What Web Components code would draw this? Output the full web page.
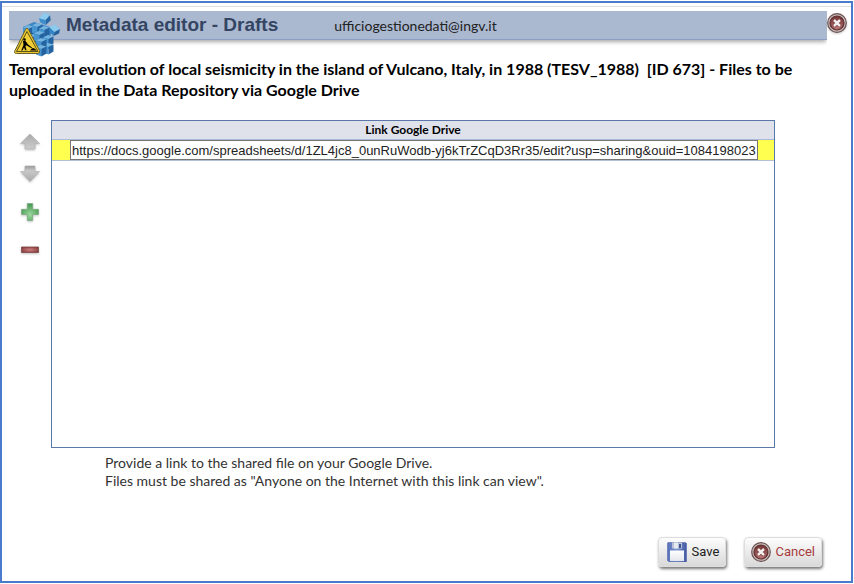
<!DOCTYPE html>
<html lang="en">
<head>
<meta charset="utf-8">
<title>Metadata editor - Drafts</title>
<style>
  html, body { margin: 0; background: #fff; }
  body { font-family: Lato, "Noto Sans", sans-serif; color: #000; }
</style>
</head>
<body>
<metadata-dialog>
  <dialog-header slot="header" email="ufficiogestionedati@ingv.it">Metadata editor - Drafts</dialog-header>
  <span slot="subject">Temporal evolution of local seismicity in the island of Vulcano, Italy, in 1988 (TESV_1988)&nbsp; [ID 673] - Files to be uploaded in the Data Repository via Google Drive</span>
  <row-tools slot="tools"></row-tools>
  <link-table slot="table" heading="Link Google Drive" value="https://docs.google.com/spreadsheets/d/1ZL4jc8_0unRuWodb-yj6kTrZCqD3Rr35/edit?usp=sharing&amp;ouid=1084198023"></link-table>
  <span slot="help">Provide a link to the shared file on your Google Drive.<br>Files must be shared as "Anyone on the Internet with this link can view".</span>
  <action-button slot="actions" icon="save">Save</action-button>
  <action-button slot="actions" icon="close" class="cancel">Cancel</action-button>
</metadata-dialog>

<script>
const icons = {
  close: `<svg viewBox="0 0 20 20" aria-hidden="true">
    <defs><radialGradient id="r" cx=".5" cy=".75" r=".7"><stop offset="0" stop-color="#c98080"/><stop offset="1" stop-color="#783434"/></radialGradient></defs>
    <circle cx="10" cy="10" r="9.3" fill="#c9bcbc" stroke="#6d5050" stroke-width="1.2"/>
    <circle cx="10" cy="10" r="7" fill="url(#r)" stroke="#5c3030" stroke-width="1.2"/>
    <path d="M7 7l6 6M13 7l-6 6" stroke="#6a3535" stroke-width="4"/>
    <path d="M7 7l6 6M13 7l-6 6" stroke="#f4eeee" stroke-width="2.5"/></svg>`,
  save: `<svg viewBox="0 0 20 20" aria-hidden="true">
    <defs><linearGradient id="f" x2="1" y2="0"><stop offset="0" stop-color="#5870b8"/><stop offset=".5" stop-color="#7e95d2"/><stop offset="1" stop-color="#4258a2"/></linearGradient>
    <linearGradient id="p" x2="0" y2="1"><stop offset="0" stop-color="#fff"/><stop offset="1" stop-color="#e4e6ec"/></linearGradient></defs>
    <path d="M1 .5h17.5l1 1V20H2.200L.5 18.300V1z" fill="url(#f)" stroke="#5268ad" stroke-width=".6"/>
    <path d="M5 .5h10v6H5z" fill="#b9c2d8"/><path d="M7 .5h4v6H7z" fill="#e5e9f0"/><path d="M12 2h2v4h-2z" fill="#40538f"/>
    <path d="M3 8.500h14V19H3z" fill="url(#p)"/></svg>`,
  up: `<svg viewBox="0 0 20 18" aria-hidden="true"><defs><linearGradient id="u" x2="0" y2="1"><stop offset="0" stop-color="#aaa"/><stop offset="1" stop-color="#ccc"/></linearGradient></defs>
    <path d="M10 1L19.500 10.500H15V16H5V10.500H.5z" fill="url(#u)" stroke="#b0b0b0" stroke-width=".6"/></svg>`,
  down: `<svg viewBox="0 0 20 18" aria-hidden="true"><defs><linearGradient id="d" x2="0" y2="1"><stop offset="0" stop-color="#999"/><stop offset=".3" stop-color="#c9c9c9"/><stop offset="1" stop-color="#aaa"/></linearGradient></defs>
    <path d="M10 16.500L19.500 6.500H15V1H5V6.500H.5z" fill="url(#d)" stroke="#b0b0b0" stroke-width=".6"/></svg>`,
  add: `<svg viewBox="0 0 20 18" aria-hidden="true"><defs><radialGradient id="a" cx=".5" cy=".65" r=".6"><stop offset="0" stop-color="#9bd89d"/><stop offset="1" stop-color="#4b9957"/></radialGradient></defs>
    <path d="M7.300.5h5.400V6.300H18.500V11.500H12.700V17.500H7.300V11.500H1.500V6.300H7.300z" fill="url(#a)" stroke="#76a87a" stroke-width=".6"/></svg>`,
  remove: `<svg viewBox="0 0 20 18" aria-hidden="true"><defs><radialGradient id="m" cx=".5" cy=".5" r=".6"><stop offset="0" stop-color="#cf8080"/><stop offset="1" stop-color="#843a3a"/></radialGradient></defs>
    <path d="M1.500 6h17v5.500h-17z" fill="url(#m)" stroke="#824848" stroke-width=".8"/></svg>`,
  logo: `<svg viewBox="0 0 48 44" aria-hidden="true">
    <defs><g id="c"><path d="M0 2.500L5 0 10.500 1.500 5.500 4z" fill="#74b4df"/><path d="M0 2.500L5.500 4V11.500L0 9.500z" fill="#4795cf"/><path d="M5.500 4L10.500 1.500V8.500L5.500 11.500z" fill="#2562a0"/></g></defs>
    <path d="M9 14L20 9 36 14 38 33 27 43 14 36z" fill="#3a86c3"/>
    <use href="#c" x="9" y="12"/><use href="#c" x="18" y="10"/><use href="#c" x="25" y="13"/>
    <use href="#c" x="12" y="21"/><use href="#c" x="20" y="18"/>
    <use href="#c" x="29" y="22"/><use href="#c" x="29" y="30"/>
    <use href="#c" x="22" y="25"/><use href="#c" x="22" y="32"/>
    <g transform="rotate(-8 31 6)"><path d="M25 4.500L31 0 36.500 3 31.500 7z" fill="#8bcbed"/><path d="M25 4.500L31.500 7 31 12 26 9z" fill="#3d8fcb"/><path d="M31.500 7L36.500 3V8L31 12z" fill="#2767a5"/></g>
    <path d="M35 14L41 11.500 46 16 40.500 19z" fill="#8bcbed"/><path d="M35 14L40.500 19 39.500 23 36 19.500z" fill="#3286c5"/><path d="M40.500 19L46 16 45 20.500 39.500 23z" fill="#245f9d"/>
    <path d="M11.500 16.500Q13 14 14.500 16.500L25.500 37.500Q26.500 40.500 23.500 40.500H2.500Q-.5 40.500 1 37.500z" fill="#e9c72e" stroke="#66612f" stroke-width="1"/>
    <path d="M13 18.500L24 38.500H2.500z" fill="#efcd35" stroke="#393516" stroke-width=".8"/>
    <circle cx="10.500" cy="26.500" r="1.200"/><path d="M9 28l2.200-.5 2.800 4 4 3-.6.800-5-3-1 1 1.200 4h-1.400L10 34.500 8.500 37.500H7.200L9.500 32z"/><path d="M16 37.500q2-3.500 4-2.300t3 2.300z"/></svg>`
};

function define(name, html, ready) {
  const template = document.createElement('template');
  template.innerHTML = html;
  customElements.define(name, class extends HTMLElement {
    constructor() {
      super();
      this.attachShadow({ mode: 'open' }).append(template.content.cloneNode(true));
    }
    connectedCallback() { if (ready) ready(this, this.shadowRoot); }
  });
}

define('dialog-header', `<style>
  :host { display: flex; align-items: flex-start; }
  .bar { flex: 1; box-sizing: border-box; height: 29px; display: flex; align-items: center; background: #aab8d0;
    border-bottom: 1px solid #8d9fc3; box-shadow: 0 3px 4px -1px #aaa; clip-path: inset(0 0 -20px 0); }
  .logo { width: 48px; height: 44px; align-self: flex-start; margin: 2px 4px 0 5px; }
  .logo svg { display: block; width: 100%; height: 100%; }
  h1 { margin: 0 56px 0 0; font: bold 19px/28px "Liberation Sans", sans-serif; color: #344563; white-space: nowrap; }
  .email { font-size: 14px; color: #222; }
  button { width: 20px; height: 20px; padding: 0; border: 0; background: none; margin: 2px 0 0; filter: drop-shadow(0 1px 1px #9998); }
  button svg { display: block; width: 20px; height: 20px; }
</style>
<div class="bar"><span class="logo">${icons.logo}</span><h1><slot></slot></h1><span class="email"></span></div>
<button type="button" aria-label="Close">${icons.close}</button>`,
  (host, root) => { root.querySelector('.email').textContent = host.getAttribute('email'); });

define('row-tools', `<style>
  :host { display: flex; flex-direction: column; align-items: center; gap: 20px; width: 20px; padding-top: 13px; }
  button { display: block; width: 20px; height: 18px; padding: 0; border: 0; background: none; filter: drop-shadow(0 1px 1px #8888); }
  button:first-of-type { margin-bottom: -6px; }
  svg { display: block; width: 20px; height: 18px; }
</style>
<button type="button" aria-label="Move up">${icons.up}</button>
<button type="button" aria-label="Move down">${icons.down}</button>
<button type="button" aria-label="Add row">${icons.add}</button>
<button type="button" aria-label="Remove row">${icons.remove}</button>`);

define('link-table', `<style>
  :host { display: block; box-sizing: border-box; min-height: 328px; border: 1px solid #5b77aa; }
  table { width: 100%; border-collapse: collapse; }
  th { height: 18px; padding: 0; background: #dfe2eb; border-bottom: 1px solid #a9bad6; font-size: 12px; line-height: 18px; font-weight: bold; }
  td { padding: 0 16px 0 18px; background: #ffff50; border-bottom: 1px solid #b3c0d4; }
  input { display: block; box-sizing: border-box; width: 100%; height: 20px; margin: 0; padding: 0 1px; border: 1px solid #767676;
    font: 13px/18px "Liberation Sans", sans-serif; color: #222; background: #fff; }
</style>
<table><thead><tr><th id="heading" scope="col"></th></tr></thead>
<tbody><tr><td><input type="text" aria-labelledby="heading"></td></tr></tbody></table>`,
  (host, root) => {
    root.querySelector('th').textContent = host.getAttribute('heading');
    root.querySelector('input').value = host.getAttribute('value');
  });

define('action-button', `<style>
  :host { display: block; color: #222; --pad: 8px; --gap: 5px; }
  :host(.cancel) { color: #a83c3c; --pad: 6px; --gap: 4px; }
  button { display: flex; align-items: center; gap: var(--gap); height: 30px; padding: 0 6px 0 var(--pad); border: 1px solid #ddd; border-radius: 4px;
    background: linear-gradient(#fdfdfd, #d9d9d9); box-shadow: 1px 2px 3px #777; color: inherit; font: 13px/20px Roboto, sans-serif; }
  svg { display: block; width: 20px; height: 20px; }
</style>
<button type="button"><span class="icon"></span><span><slot></slot></span></button>`,
  (host, root) => { root.querySelector('.icon').innerHTML = icons[host.getAttribute('icon')]; });

define('metadata-dialog', `<style>
  :host { display: flex; flex-direction: column; box-sizing: border-box; min-height: 100vh; padding: 1px 1px 1px 0; }
  .frame { flex: 1; display: flex; flex-direction: column; border: 2px solid #4a7acb; }
  main { flex: 1; display: flex; flex-direction: column; margin-top: 3px; border-top: 1px solid #dedede; padding: 4px 4px 14px 7px; }
  h2 { margin: 18px 48px 20px 0; font-size: 16px; line-height: 21px; font-weight: bold; }
  .work { display: flex; gap: 11px; padding: 0 72px 0 11px; }
  .table { flex: 1; min-width: 0; }
  p { margin: 6px 0 16px 96px; font-size: 14px; line-height: 18px; color: #333; }
  footer { display: flex; justify-content: flex-end; gap: 18px; margin-top: auto; padding-right: 25px; }
</style>
<div class="frame"><main>
  <slot name="header"></slot>
  <h2><slot name="subject"></slot></h2>
  <div class="work"><slot name="tools"></slot><div class="table"><slot name="table"></slot></div></div>
  <p><slot name="help"></slot></p>
  <footer><slot name="actions"></slot></footer>
</main></div>`);
</script>
</body>
</html>
